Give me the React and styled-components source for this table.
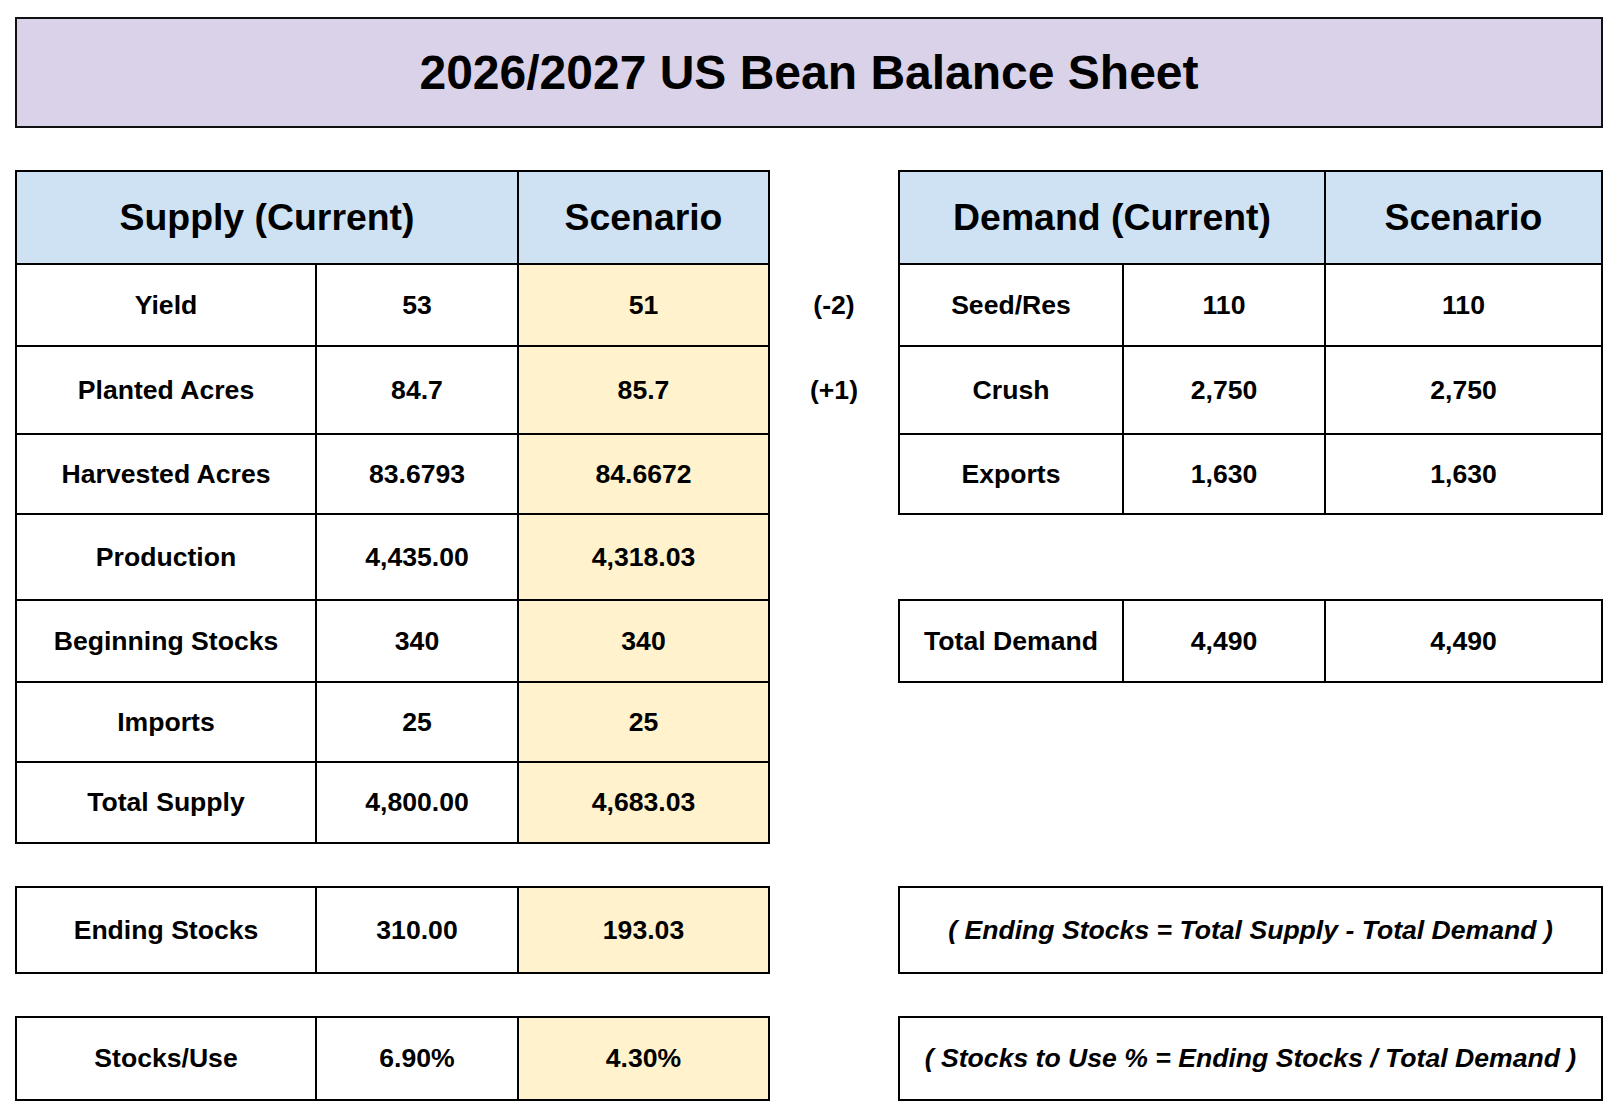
import React from "react";
import styled, { createGlobalStyle } from "styled-components";

const GlobalStyle = createGlobalStyle`
  html, body {
    margin: 0;
    padding: 0;
    background: #ffffff;
  }
  body {
    font-family: "Liberation Sans", Arial, sans-serif;
    color: #000;
  }
`;

const Page = styled.div`
  width: 1623px;
  min-height: 1114px;
  box-sizing: border-box;
  padding: 17px 20px 0 15px;
  font-family: "Liberation Sans", Arial, sans-serif;
`;

const TitleBox = styled.header`
  width: 1588px;
  height: 111px;
  box-sizing: border-box;
  border: 2px solid #111;
  background: #d9d2e9;
  display: flex;
  align-items: center;
  justify-content: center;
  font-size: 48px;
  font-weight: 700;
`;

const Body = styled.div`
  margin-top: 42px;
  display: grid;
  grid-template-columns: 755px 128px 705px;
  row-gap: 42px;
  align-items: start;
`;

const Column = styled.div`
  display: flex;
  flex-direction: column;
`;

const Grid = styled.div`
  display: grid;
  grid-template-columns: ${(p) => p.$cols};
  grid-template-rows: ${(p) => p.$rows};
  gap: 2px;
  padding: 2px;
  background: #000;
  margin-top: ${(p) => p.$offset || 0}px;
`;

const Cell = styled.div`
  display: flex;
  align-items: center;
  justify-content: center;
  background: ${(p) => (p.$tone === "scenario" ? "#fff2cc" : p.$tone === "header" ? "#cfe2f3" : "#ffffff")};
  grid-column: ${(p) => (p.$span ? `span ${p.$span}` : "auto")};
  font-size: ${(p) => (p.$tone === "header" ? "37.4px" : "26.6px")};
  font-weight: 700;
  font-style: ${(p) => (p.$italic ? "italic" : "normal")};
  white-space: nowrap;
`;

const Notes = styled.div`
  display: grid;
  grid-template-rows: ${(p) => p.$rows};
  row-gap: 2px;
  padding-top: 2px;
`;

const Note = styled.div`
  display: flex;
  align-items: center;
  justify-content: center;
  font-size: 26.6px;
  font-weight: 700;
`;

const SUPPLY_COLS = "298px 200px 249px";
const DEMAND_COLS = "222px 200px 275px";

const supplyRows = [
  ["Yield", "53", "51"],
  ["Planted Acres", "84.7", "85.7"],
  ["Harvested Acres", "83.6793", "84.6672"],
  ["Production", "4,435.00", "4,318.03"],
  ["Beginning Stocks", "340", "340"],
  ["Imports", "25", "25"],
  ["Total Supply", "4,800.00", "4,683.03"],
];
const supplyHeights = [91, 80, 86, 78, 84, 80, 78, 79];

const demandRows = [
  ["Seed/Res", "110", "110"],
  ["Crush", "2,750", "2,750"],
  ["Exports", "1,630", "1,630"],
];

function DataRow({ row, scenario }) {
  return (
    <>
      <Cell>{row[0]}</Cell>
      <Cell>{row[1]}</Cell>
      <Cell $tone={scenario ? "scenario" : undefined}>{row[2]}</Cell>
    </>
  );
}

export default function App() {
  return (
    <>
      <GlobalStyle />
      <Page>
        <TitleBox>2026/2027 US Bean Balance Sheet</TitleBox>
        <Body>
          <Grid $cols={SUPPLY_COLS} $rows={supplyHeights.map((h) => `${h}px`).join(" ")}>
            <Cell $tone="header" $span={2}>Supply (Current)</Cell>
            <Cell $tone="header">Scenario</Cell>
            {supplyRows.map((r) => (
              <DataRow key={r[0]} row={r} scenario />
            ))}
          </Grid>

          <Notes $rows="91px 80px 86px">
            <span />
            <Note>(-2)</Note>
            <Note>(+1)</Note>
          </Notes>

          <Column>
            <Grid $cols={DEMAND_COLS} $rows="91px 80px 86px 78px">
              <Cell $tone="header" $span={2}>Demand (Current)</Cell>
              <Cell $tone="header">Scenario</Cell>
              {demandRows.map((r) => (
                <DataRow key={r[0]} row={r} />
              ))}
            </Grid>
            <Grid $cols={DEMAND_COLS} $rows="80px" $offset={84}>
              <DataRow row={["Total Demand", "4,490", "4,490"]} />
            </Grid>
          </Column>

          <Grid $cols={SUPPLY_COLS} $rows="84px">
            <DataRow row={["Ending Stocks", "310.00", "193.03"]} scenario />
          </Grid>
          <span />
          <Grid $cols="701px" $rows="84px">
            <Cell $italic>( Ending Stocks = Total Supply - Total Demand )</Cell>
          </Grid>

          <Grid $cols={SUPPLY_COLS} $rows="81px">
            <DataRow row={["Stocks/Use", "6.90%", "4.30%"]} scenario />
          </Grid>
          <span />
          <Grid $cols="701px" $rows="81px">
            <Cell $italic>( Stocks to Use % = Ending Stocks / Total Demand )</Cell>
          </Grid>
        </Body>
      </Page>
    </>
  );
}
